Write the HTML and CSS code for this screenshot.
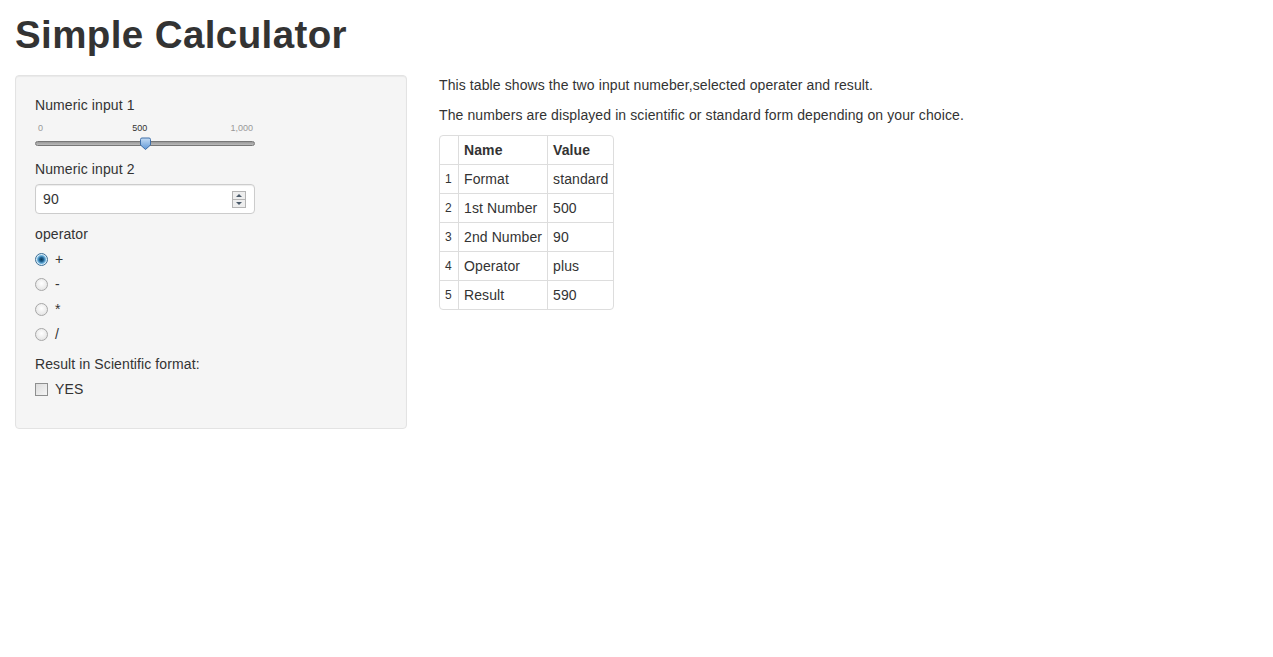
FILE: index.html
```html
<!DOCTYPE html>
<html>
<head>
<meta charset="utf-8">
<link rel="stylesheet" href="styles.css">
</head>
<body>
<div class="page">
  <header class="header"><h1>Simple Calculator</h1></header>
  <div class="row">
    <aside class="well">
      <div class="group">
        <label class="lbl">Numeric input 1</label>
        <div class="slider">
          <div class="ticks"><span>0</span><span class="cur">500</span><span>1,000</span></div>
          <div class="track">
            <svg class="handle" width="13" height="14" viewBox="0 0 13 14">
              <defs><linearGradient id="hg" x1="0" y1="0" x2="0" y2="1"><stop offset="0" stop-color="#c4dcf5"/><stop offset="1" stop-color="#5f97d6"/></linearGradient></defs>
              <path d="M1.5 2.5 Q1.5 1 3 1 H10 Q11.5 1 11.5 2.5 V8 L6.5 12.5 L1.5 8 Z" fill="url(#hg)" stroke="#3f6fa8" stroke-width="1"/>
            </svg>
          </div>
        </div>
      </div>
      <div class="group">
        <label class="lbl gap">Numeric input 2</label>
        <div class="numinput">
          <span class="val">90</span>
          <span class="spin"><span class="up"></span><span class="down"></span></span>
        </div>
      </div>
      <div class="group">
        <label class="lbl">operator</label>
        <div class="opt"><span class="radio on"></span><span>+</span></div>
        <div class="opt"><span class="radio"></span><span>-</span></div>
        <div class="opt"><span class="radio"></span><span>*</span></div>
        <div class="opt"><span class="radio"></span><span>/</span></div>
      </div>
      <div class="group last">
        <label class="lbl">Result in Scientific format:</label>
        <div class="opt"><span class="check"></span><span>YES</span></div>
      </div>
    </aside>
    <main class="main">
      <p>This table shows the two input numeber,selected operater and result.</p>
      <p>The numbers are displayed in scientific or standard form depending on your choice.</p>
      <table class="tbl">
        <thead><tr><th class="idx"></th><th>Name</th><th>Value</th></tr></thead>
        <tbody>
          <tr><td class="idx">1</td><td>Format</td><td>standard</td></tr>
          <tr><td class="idx">2</td><td>1st Number</td><td>500</td></tr>
          <tr><td class="idx">3</td><td>2nd Number</td><td>90</td></tr>
          <tr><td class="idx">4</td><td>Operator</td><td>plus</td></tr>
          <tr><td class="idx">5</td><td>Result</td><td>590</td></tr>
        </tbody>
      </table>
    </main>
  </div>
</div>
</body>
</html>
```
FILE: styles.css
```css
html, body { margin: 0; padding: 0; background: #fff; }
body {
  font-family: "Liberation Sans", Arial, sans-serif;
  font-size: 14px;
  line-height: 20px;
  color: #333;
  letter-spacing: 0.1px;
}
.page { padding: 0 15px; }
.header { padding: 15px 0 20px; }
.header h1 {
  margin: 0;
  font-size: 38.5px;
  line-height: 40px;
  font-weight: bold;
  color: #333;
  letter-spacing: 0.4px;
}
.row { display: flex; gap: 32px; align-items: flex-start; }
.well {
  width: 352px;
  padding: 19px 19px 29px;
  background: #f5f5f5;
  border: 1px solid #e3e3e3;
  border-radius: 4px;
  box-shadow: inset 0 1px 1px rgba(0,0,0,0.05);
}
.group { margin-bottom: 10px; }
.group.last { margin-bottom: 0; }
.lbl { display: block; line-height: 20px; }
.lbl.gap { margin-bottom: 5px; }
.slider { width: 220px; height: 34px; display: flex; flex-direction: column; }
.ticks {
  display: flex; justify-content: space-between;
  font-size: 9px; line-height: 10px; color: #999; letter-spacing: 0;
  margin-top: 8px; padding: 0 2px 0 3px;
}
.ticks .cur { color: #333; margin-left: 6px; }
.track {
  position: relative;
  margin-top: 8px;
  height: 3px;
  border: 1px solid #777;
  border-radius: 3px;
  background: linear-gradient(#999, #bbb);
}
.handle { position: absolute; left: 103px; top: -5px; }
.numinput {
  height: 28px;
  border: 1px solid #ccc; border-radius: 4px;
  background: #fff;
  display: flex; align-items: center; justify-content: space-between;
  padding: 0 8px 0 7px; box-sizing: content-box; width: 203px;
  box-shadow: inset 0 1px 1px rgba(0,0,0,0.075);
}
.spin { display: flex; flex-direction: column; width: 12px; border: 1px solid #b4b4b4; }
.spin .up, .spin .down {
  height: 7px; background: #eee; position: relative;
}
.spin .up { border-bottom: 1px solid #b4b4b4; }
.spin .up::after, .spin .down::after {
  content: ""; position: absolute; left: 3px; width: 0; height: 0;
  border-left: 3px solid transparent; border-right: 3px solid transparent;
}
.spin .up::after { top: 2px; border-bottom: 3px solid #4a5a6a; }
.spin .down::after { top: 2px; border-top: 3px solid #4a5a6a; }
.opt { display: flex; align-items: center; height: 20px; margin-top: 5px; gap: 7px; }
.radio {
  width: 11px; height: 11px; border-radius: 50%;
  border: 1px solid #a7a7a7;
  background: radial-gradient(circle at 50% 40%, #fff, #ddd);
}
.radio.on {
  border-color: #3c6f96;
  background: radial-gradient(circle, #0b3a58 0, #1d5f8e 2px, #6fb4df 4px, #d7ebf7 5px);
}
.check {
  width: 11px; height: 11px;
  border: 1px solid #8e8f8f;
  background: linear-gradient(135deg, #dcdcdc, #f5f5f5);
}
.main p { margin: 0 0 10px; }
.tbl {
  border-collapse: separate; border-spacing: 0;
  border: 1px solid #ddd; border-radius: 4px;
}
.tbl th, .tbl td {
  padding: 4px 5px; line-height: 20px; text-align: left;
  border-left: 1px solid #ddd; border-top: 1px solid #ddd;
}
.tbl th { border-top: 0; font-weight: bold; }
.tbl tr > :first-child { border-left: 0; }
.tbl .idx { font-size: 12px; width: 8px; padding: 4px 5px; letter-spacing: 0; }
```
